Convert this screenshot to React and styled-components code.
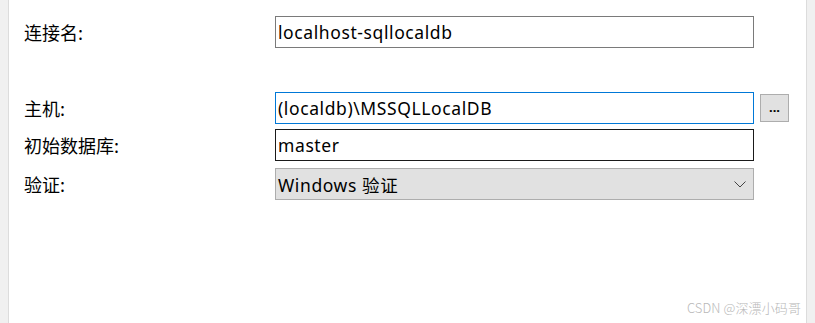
import React from "react";
import styled, { createGlobalStyle } from "styled-components";

const Global = createGlobalStyle`
  html, body { margin: 0; padding: 0; background: #ffffff; }
  body { font-family: "Noto Sans CJK SC", "Noto Sans", sans-serif; }
`;

const Window = styled.div`
  width: 815px;
  height: 323px;
  display: flex;
  position: relative;
  overflow: hidden;
  background: #ffffff;
`;

const SideStrip = styled.div`
  width: 8px;
  flex: none;
  background: #f0f0f0;
  border-${(p) => p.$side}: 1px solid #dcdcdc;
`;

const Panel = styled.div`
  flex: 1;
  padding: 16px 0 0 15px;
  display: flex;
  flex-direction: column;
`;

const Row = styled.div`
  display: grid;
  grid-template-columns: 251px 479px 6px 29px;
  align-items: center;
  height: 32px;
  margin-top: ${(p) => p.$mt || 0}px;
`;

const Label = styled.div`
  font-size: 18px;
  color: #000;
  line-height: 32px;
  white-space: nowrap;
`;

const Field = styled.div`
  grid-column: 2;
  height: 32px;
  box-sizing: border-box;
  border: 1px solid ${(p) => p.$border};
  background: ${(p) => p.$bg || "#fff"};
  display: flex;
  align-items: center;
  padding-left: 2px;
  padding-right: 7px;
  font-family: "Noto Sans", "Noto Sans CJK SC", sans-serif;
  font-size: 17.5px;
  letter-spacing: 0.6px;
  color: #000;
  white-space: nowrap;
`;

const FieldText = styled.span`
  flex: 1;
`;

const DotsButton = styled.div`
  grid-column: 4;
  width: 29px;
  height: 28px;
  box-sizing: border-box;
  border: 1px solid #adadad;
  background: #e1e1e1;
  display: flex;
  align-items: center;
  justify-content: center;
  font-family: "Noto Sans", sans-serif;
  font-size: 13px;
  font-weight: 700;
  line-height: 1;
  padding-bottom: 2px;
  color: #000;
`;

const Watermark = styled.div`
  position: absolute;
  right: 14px;
  bottom: 6px;
  font-family: "Noto Sans CJK SC", "Noto Sans", sans-serif;
  font-size: 13px;
  font-weight: 300;
  color: #b8b8b8;
  letter-spacing: 0.1px;
`;

const Chevron = () => (
  <svg width="12" height="7" viewBox="0 0 12 7" fill="none">
    <path d="M0.5 0.5 L6 6 L11.5 0.5" stroke="#444" strokeWidth="1" />
  </svg>
);

export default function App() {
  return (
    <Window>
      <Global />
      <SideStrip $side="right" />
      <Panel>
        <Row>
          <Label>连接名:</Label>
          <Field $border="#7a7a7a">
            <FieldText>localhost-sqllocaldb</FieldText>
          </Field>
        </Row>
        <Row $mt={44}>
          <Label>主机:</Label>
          <Field $border="#0078d7">
            <FieldText>(localdb)\MSSQLLocalDB</FieldText>
          </Field>
          <DotsButton>...</DotsButton>
        </Row>
        <Row $mt={5}>
          <Label>初始数据库:</Label>
          <Field $border="#1a1a1a">
            <FieldText>master</FieldText>
          </Field>
        </Row>
        <Row $mt={7}>
          <Label>验证:</Label>
          <Field $border="#adadad" $bg="#e1e1e1">
            <FieldText>Windows 验证</FieldText>
            <Chevron />
          </Field>
        </Row>
      </Panel>
      <SideStrip $side="left" />
      <Watermark>CSDN @深漂小码哥</Watermark>
    </Window>
  );
}
